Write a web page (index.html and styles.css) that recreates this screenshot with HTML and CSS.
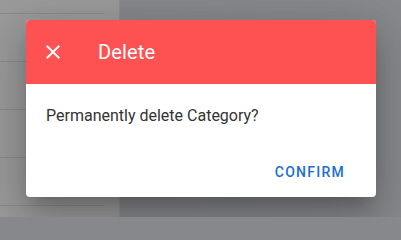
FILE: index.html
```html
<!DOCTYPE html>
<html>
<head>
<meta charset="utf-8">
<link rel="stylesheet" href="styles.css">
</head>
<body>
<div class="screen">
  <div class="page">
    <aside class="sidebar">
      <div class="row first"></div>
      <div class="row"></div>
      <div class="row"></div>
      <div class="row"></div>
      <div class="row"></div>
    </aside>
    <main class="main"></main>
  </div>
  <div class="dialog">
    <header class="dialog-header">
      <svg class="close-icon" width="24" height="24" viewBox="0 0 24 24"><path d="M19 6.41L17.59 5 12 10.59 6.41 5 5 6.41 10.59 12 5 17.59 6.41 19 12 13.41 17.59 19 19 17.59 13.41 12z" fill="#fff"/></svg>
      <h1 class="dialog-title">Delete</h1>
    </header>
    <div class="dialog-body">Permanently delete Category?</div>
    <div class="dialog-actions">
      <button class="btn">CONFIRM</button>
    </div>
  </div>
</div>
</body>
</html>
```
FILE: styles.css
```css
html, body {
  margin: 0;
  padding: 0;
  width: 401px;
  height: 217px;
  overflow: hidden;
}
body {
  background: #87888c;
  font-family: Roboto, "Liberation Sans", sans-serif;
}
.screen {
  position: relative;
  width: 401px;
  height: 217px;
  overflow: hidden;
}
.page {
  display: flex;
  height: 217px;
}
.sidebar {
  width: 120px;
  background: #9a9a9a;
  border-right: 1px solid #8e8e90;
  box-sizing: border-box;
}
.row {
  width: 104px;
  height: 48px;
  border-bottom: 1px solid #8a8a8a;
  box-sizing: border-box;
}
.row.first {
  height: 14px;
}
.main {
  flex: 1;
  background: linear-gradient(90deg, #86878b 0%, #88898d 100%);
}
.dialog {
  position: absolute;
  left: 26px;
  top: 20px;
  width: 350px;
  height: 177px;
  background: #fff;
  border-radius: 4px;
  overflow: hidden;
  box-shadow: 0 11px 15px -7px rgba(0,0,0,0.2), 0 24px 38px 3px rgba(0,0,0,0.14), 0 9px 46px 8px rgba(0,0,0,0.12);
  display: flex;
  flex-direction: column;
}
.dialog-header {
  height: 64px;
  background: #fe5151;
  display: flex;
  align-items: center;
  padding-left: 15px;
  flex-shrink: 0;
}
.close-icon {
  display: block;
}
.dialog-title {
  margin: 0 0 0 33px;
  font-size: 20px;
  font-weight: 400;
  color: #fff;
  letter-spacing: 0.15px;
}
.dialog-body {
  padding: 20px 20px 0 20px;
  font-size: 16px;
  line-height: 24px;
  color: #333;
}
.dialog-actions {
  margin-top: auto;
  display: flex;
  justify-content: flex-end;
  padding: 0 23px 7px 8px;
}
.btn {
  font-family: Roboto, "Liberation Sans", sans-serif;
  font-size: 14px;
  font-weight: 500;
  letter-spacing: 1.25px;
  color: #1a70d0;
  background: none;
  border: none;
  height: 36px;
  padding: 0 8px;
  min-width: 64px;
}
```
